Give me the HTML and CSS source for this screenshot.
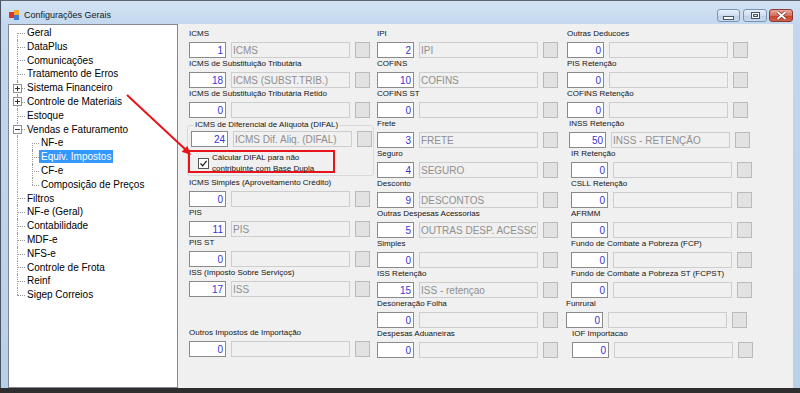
FILE: index.html
```html
<!DOCTYPE html>
<html>
<head>
    <meta charset="UTF-8">
    <title>Configurações Gerais</title>
    <link rel="stylesheet" href="styles.css">
</head>
<body>
    <div class="window">
        <div class="titlebar">
            <svg class="app-icon" width="11" height="11" viewBox="0 0 11 11">
                <rect x="0" y="2" width="5" height="6" fill="#d9352b"/>
                <rect x="5" y="0" width="5" height="5" fill="#f0a830"/>
                <rect x="5" y="5" width="5" height="5" fill="#3b7fd4"/>
            </svg>
            <span class="title">Configurações Gerais</span>
            <div class="caption-btns">
                <button class="cap cap-min"><svg width="11" height="4" viewBox="0 0 11 4"><rect x="0.5" y="0.5" width="10" height="3" fill="#fff" stroke="#44556b"/></svg></button>
                <button class="cap cap-max"><svg width="9" height="7" viewBox="0 0 9 7"><rect x="0.5" y="0.5" width="8" height="6" fill="none" stroke="#44556b"/><rect x="1.5" y="1.5" width="6" height="4" fill="none" stroke="#fff"/><rect x="2.5" y="2.5" width="4" height="2" fill="none" stroke="#44556b"/></svg></button>
                <button class="cap cap-close"><svg width="11" height="9" viewBox="0 0 11 9"><path d="M1.5 1 L9.5 8 M9.5 1 L1.5 8" stroke="#7a2a20" stroke-width="3.2"/><path d="M1.5 1 L9.5 8 M9.5 1 L1.5 8" stroke="#fff" stroke-width="1.8"/></svg></button>
            </div>
        </div>

        <div class="client">
            <div class="tree">
                <div class="node first">Geral</div>
                <div class="node">DataPlus</div>
                <div class="node">Comunicações</div>
                <div class="node">Tratamento de Erros</div>
                <div class="node"><span class="exp plus"></span>Sistema Financeiro</div>
                <div class="node"><span class="exp plus"></span>Controle de Materiais</div>
                <div class="node">Estoque</div>
                <div class="node"><span class="exp"></span>Vendas e Faturamento</div>
                <div class="children">
                    <div class="node child first">NF-e</div>
                    <div class="node child"><span class="sel">Equiv. Impostos</span></div>
                    <div class="node child">CF-e</div>
                    <div class="node child last">Composição de Preços</div>
                </div>
                <div class="node">Filtros</div>
                <div class="node">NF-e (Geral)</div>
                <div class="node">Contabilidade</div>
                <div class="node">MDF-e</div>
                <div class="node">NFS-e</div>
                <div class="node">Controle de Frota</div>
                <div class="node">Reinf</div>
                <div class="node last">Sigep Correios</div>
            </div>

            <div class="form">
                <!-- coluna 1 -->
                <div class="col col-1">
                    <div class="field">
                        <label>ICMS</label>
                        <div class="row"><input class="num" value="1" readonly><input class="desc" value="ICMS" readonly><button class="lookup"></button></div>
                    </div>
                    <div class="field">
                        <label>ICMS de Substituição Tributária</label>
                        <div class="row"><input class="num" value="18" readonly><input class="desc" value="ICMS (SUBST.TRIB.)" readonly><button class="lookup"></button></div>
                    </div>
                    <div class="field">
                        <label>ICMS de Substituição Tributária Retido</label>
                        <div class="row"><input class="num" value="0" readonly><input class="desc" value="" readonly><button class="lookup"></button></div>
                    </div>
                    <div class="group">
                        <div class="group-title">ICMS de Diferencial de Alíquota (DIFAL)</div>
                        <div class="row"><input class="num" value="24" readonly><input class="desc" value="ICMS Dif. Aliq. (DIFAL)" readonly><button class="lookup"></button></div>
                        <div class="difal-check">
                            <span class="checkbox"><svg width="9" height="9" viewBox="0 0 9 9"><path d="M1.5 4.5 L3.7 6.8 L7.6 1.8" fill="none" stroke="#222" stroke-width="1.3"/></svg></span>
                            <span class="check-text">Cálcular DIFAL para não<br>contribuinte com Base Dupla</span>
                        </div>
                    </div>
                    <div class="field">
                        <label>ICMS Simples (Aproveitamento Crédito)</label>
                        <div class="row"><input class="num" value="0" readonly><input class="desc" value="" readonly><button class="lookup"></button></div>
                    </div>
                    <div class="field">
                        <label>PIS</label>
                        <div class="row"><input class="num" value="11" readonly><input class="desc" value="PIS" readonly><button class="lookup"></button></div>
                    </div>
                    <div class="field">
                        <label>PIS ST</label>
                        <div class="row"><input class="num" value="0" readonly><input class="desc" value="" readonly><button class="lookup"></button></div>
                    </div>
                    <div class="field">
                        <label>ISS (Imposto Sobre Serviços)</label>
                        <div class="row"><input class="num" value="17" readonly><input class="desc" value="ISS" readonly><button class="lookup"></button></div>
                    </div>
                    <div class="spacer"></div>
                    <div class="field">
                        <label>Outros Impostos de Importação</label>
                        <div class="row"><input class="num" value="0" readonly><input class="desc" value="" readonly><button class="lookup"></button></div>
                    </div>
                </div>

                <!-- coluna 2 -->
                <div class="col col-2">
                    <div class="field">
                        <label>IPI</label>
                        <div class="row"><input class="num" value="2" readonly><input class="desc" value="IPI" readonly><button class="lookup"></button></div>
                    </div>
                    <div class="field">
                        <label>COFINS</label>
                        <div class="row"><input class="num" value="10" readonly><input class="desc" value="COFINS" readonly><button class="lookup"></button></div>
                    </div>
                    <div class="field">
                        <label>COFINS ST</label>
                        <div class="row"><input class="num" value="0" readonly><input class="desc" value="" readonly><button class="lookup"></button></div>
                    </div>
                    <div class="field">
                        <label>Frete</label>
                        <div class="row"><input class="num" value="3" readonly><input class="desc" value="FRETE" readonly><button class="lookup"></button></div>
                    </div>
                    <div class="field">
                        <label>Seguro</label>
                        <div class="row"><input class="num" value="4" readonly><input class="desc" value="SEGURO" readonly><button class="lookup"></button></div>
                    </div>
                    <div class="field">
                        <label>Desconto</label>
                        <div class="row"><input class="num" value="9" readonly><input class="desc" value="DESCONTOS" readonly><button class="lookup"></button></div>
                    </div>
                    <div class="field">
                        <label>Outras Despesas Acessorias</label>
                        <div class="row"><input class="num" value="5" readonly><input class="desc" value="OUTRAS DESP. ACESSORIAS" readonly><button class="lookup"></button></div>
                    </div>
                    <div class="field">
                        <label>Simples</label>
                        <div class="row"><input class="num" value="0" readonly><input class="desc" value="" readonly><button class="lookup"></button></div>
                    </div>
                    <div class="field">
                        <label>ISS Retenção</label>
                        <div class="row"><input class="num" value="15" readonly><input class="desc" value="ISS - retençao" readonly><button class="lookup"></button></div>
                    </div>
                    <div class="field">
                        <label>Desoneração Folha</label>
                        <div class="row"><input class="num" value="0" readonly><input class="desc" value="" readonly><button class="lookup"></button></div>
                    </div>
                    <div class="field">
                        <label>Despesas Aduaneiras</label>
                        <div class="row"><input class="num" value="0" readonly><input class="desc" value="" readonly><button class="lookup"></button></div>
                    </div>
                </div>

                <!-- coluna 3 -->
                <div class="col col-3">
                    <div class="field">
                        <label>Outras Deducoes</label>
                        <div class="row"><input class="num" value="0" readonly><input class="desc" value="" readonly><button class="lookup"></button></div>
                    </div>
                    <div class="field">
                        <label>PIS Retenção</label>
                        <div class="row"><input class="num" value="0" readonly><input class="desc" value="" readonly><button class="lookup"></button></div>
                    </div>
                    <div class="field">
                        <label>COFINS Retenção</label>
                        <div class="row"><input class="num" value="0" readonly><input class="desc" value="" readonly><button class="lookup"></button></div>
                    </div>
                    <div class="field shift-2">
                        <label>INSS Retenção</label>
                        <div class="row"><input class="num" value="50" readonly><input class="desc" value="INSS - RETENÇÃO" readonly><button class="lookup"></button></div>
                    </div>
                    <div class="field shift-4">
                        <label>IR Retenção</label>
                        <div class="row"><input class="num" value="0" readonly><input class="desc" value="" readonly><button class="lookup"></button></div>
                    </div>
                    <div class="field shift-4">
                        <label>CSLL Retenção</label>
                        <div class="row"><input class="num" value="0" readonly><input class="desc" value="" readonly><button class="lookup"></button></div>
                    </div>
                    <div class="field shift-4">
                        <label>AFRMM</label>
                        <div class="row"><input class="num" value="0" readonly><input class="desc" value="" readonly><button class="lookup"></button></div>
                    </div>
                    <div class="field shift-4">
                        <label>Fundo de Combate a Pobreza (FCP)</label>
                        <div class="row"><input class="num" value="0" readonly><input class="desc" value="" readonly><button class="lookup"></button></div>
                    </div>
                    <div class="field shift-4">
                        <label>Fundo de Combate a Pobreza ST (FCPST)</label>
                        <div class="row"><input class="num" value="0" readonly><input class="desc" value="" readonly><button class="lookup"></button></div>
                    </div>
                    <div class="field shift-m1">
                        <label>Funrural</label>
                        <div class="row"><input class="num" value="0" readonly><input class="desc" value="" readonly><button class="lookup"></button></div>
                    </div>
                    <div class="field shift-5">
                        <label>IOF Importacao</label>
                        <div class="row"><input class="num" value="0" readonly><input class="desc" value="" readonly><button class="lookup"></button></div>
                    </div>
                </div>
            </div>
        </div>

        <!-- seta de anotação -->
        <svg class="annotation" width="800" height="393" viewBox="0 0 800 393">
            <line x1="127" y1="95" x2="186" y2="150" stroke="#e8141b" stroke-width="2"/>
            <polygon points="191,155 181.7,151.7 187.3,145.9" fill="#e8141b"/>
        </svg>
    </div>
</body>
</html>
```

FILE: styles.css
```css
html, body { margin: 0; padding: 0; }
body { width: 800px; height: 393px; overflow: hidden; background: #2e2e2e; font-family: "Liberation Sans", Arial, sans-serif; }

.window { position: relative; width: 800px; height: 388px; box-sizing: border-box; border-top: 1px solid #5a6472; border-left: 1px solid #4a5360; background: linear-gradient(#d4e3f4, #c2d7ee 24px, #b9d0e9); }

/* barra de título */
.titlebar { height: 23px; box-sizing: border-box; padding: 5px 0 0 8px; display: flex; align-items: center; }
.app-icon { display: block; margin-top: 1px; }
.title { margin-left: 4px; font-size: 9px; color: #101820; }
.caption-btns { margin-left: auto; display: flex; align-items: center; padding-right: 7px; margin-top: 1px; }
.cap { height: 13px; padding: 0; border: 1px solid #7b93b3; border-radius: 3px; display: flex; align-items: center; justify-content: center; background: linear-gradient(#e6eff9, #cddcee 50%, #bccfe6 51%, #c9daee); }
.cap-min { width: 23px; margin-right: 3px; }
.cap-min svg { margin-top: 4px; }
.cap-max { width: 24px; margin-right: 2px; }
.cap-close { width: 24px; border-color: #8a3a30; background: linear-gradient(#e9a99b, #d6705e 50%, #c8412c 51%, #d3604b); }

/* área cliente */
.client { display: flex; margin: 0 7px 0 7px; height: 364px; background: #f0f0f0; }

/* árvore */
.tree { width: 170px; flex: none; box-sizing: border-box; border: 1px solid #828790; background: #fff; padding-top: 1px; font-size: 10px; color: #000; }
.node { position: relative; height: 13.8px; line-height: 13.8px; padding-left: 18px; white-space: nowrap; }
.node::before { content: ""; position: absolute; left: 8px; top: 50%; width: 8px; border-top: 1px dotted #9a9a9a; }
.node::after { content: ""; position: absolute; left: 8px; top: 0; bottom: 0; border-left: 1px dotted #9a9a9a; }
.node.first::after { top: 50%; }
.node.last::after { bottom: 50%; }
.children { margin-left: 8px; border-left: 1px dotted #9a9a9a; }
.node.child { padding-left: 23px; }
.node.child::before { left: 14px; width: 7px; }
.node.child::after { left: 14px; }
.exp { position: absolute; z-index: 1; left: 4px; top: 2.5px; width: 9px; height: 9px; box-sizing: border-box; border: 1px solid #919191; background: #fff; }
.exp::before { content: ""; position: absolute; left: 1px; top: 3px; width: 5px; height: 1px; background: #333; }
.exp.plus::after { content: ""; position: absolute; left: 3px; top: 1px; width: 1px; height: 5px; background: #333; }
.sel { display: inline-block; background: #3399ff; color: #fff; padding: 0 2px; margin-left: -2px; line-height: 13px; }

/* formulário */
.form { flex: 1; display: flex; padding: 5px 0 0 11px; }
.col-1 { width: 188px; }
.col-2 { width: 190px; }
.col-3 { flex: 1; }

.field { margin-bottom: 1px; }
.field label { display: block; height: 10px; line-height: 10px; margin-bottom: 3px; font-size: 8px; color: #141414; white-space: nowrap; }
.spacer { height: 30px; }
.shift-2 { margin-left: 2px; }
.shift-4 { margin-left: 4px; }
.shift-5 { margin-left: 5px; }
.shift-m1 { margin-left: -1px; }

.row { display: flex; gap: 5px; height: 16px; }
.num, .desc { height: 16px; box-sizing: border-box; margin: 0; font-family: "Liberation Sans", Arial, sans-serif; font-size: 10px; outline: none; }
.num { width: 37px; border: 1px solid #8a8a8a; background: #fff; color: #3434d4; text-align: right; padding: 0 2px 0 0; }
.desc { width: 119px; border: 1px solid #cdcdcd; background: #f0f0f0; color: #8f8f8f; padding: 0 1px; }
.lookup { width: 15px; height: 16px; padding: 0; margin: 0; border: 1px solid #bababa; background: #e2e2e2; }

/* grupo DIFAL */
.group { margin: 7px 0 2px -2px; width: 187px; box-sizing: border-box; border: 1px solid #d5dadf; border-radius: 3px; padding-bottom: 2px; }
.group-title { width: max-content; margin: -6px 0 0 6px; padding: 0 1px; height: 10px; line-height: 10px; font-size: 8px; color: #141414; background: #f0f0f0; }
.group .row { margin: 1px 0 0 3px; }
.difal-check { margin-top: 3px; width: 147px; height: 23px; box-sizing: border-box; border: 2px solid #e8141b; display: flex; align-items: flex-start; padding-left: 8px; }
.checkbox { width: 11px; height: 11px; box-sizing: border-box; margin-top: 6px; border: 1px solid #555; background: #fff; display: flex; align-items: center; justify-content: center; }
.check-text { margin-left: 3px; font-size: 8px; line-height: 11px; color: #141414; white-space: nowrap; }

/* anotação sobre a captura */
.annotation { position: absolute; left: -1px; top: -1px; pointer-events: none; }
```
